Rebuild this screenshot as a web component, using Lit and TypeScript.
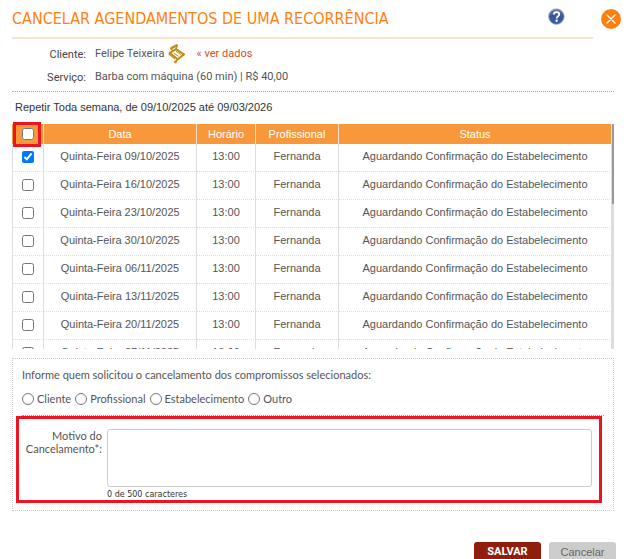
import { LitElement, html, css } from "lit";
import { customElement, state } from "lit/decorators.js";

const DATES = [
  "09/10/2025",
  "16/10/2025",
  "23/10/2025",
  "30/10/2025",
  "06/11/2025",
  "13/11/2025",
  "20/11/2025",
  "27/11/2025",
];

const REQUESTERS = ["Cliente", "Profissional", "Estabelecimento", "Outro"];

@customElement("app-root")
export class AppRoot extends LitElement {
  @state() private selected = new Set<string>([DATES[0]]);
  @state() private reason = "";

  static styles = css`
    :host {
      display: block;
      box-sizing: border-box;
      height: 100vh;
      overflow: hidden;
      background: #fff;
      color: #555;
      font: 11px/14px Roboto, sans-serif;
    }
    * {
      box-sizing: border-box;
    }
    .header {
      display: flex;
      gap: 8px;
      padding: 0 17px 0 12px;
    }
    .heading {
      flex: 1;
      display: flex;
      justify-content: space-between;
      height: 39px;
      padding: 8px 28px 0 0;
      border-bottom: 2px solid #fce2cb;
    }
    h1 {
      margin: 0;
      font-family: "DejaVu Sans Condensed", sans-serif;
      font-size: 16px;
      line-height: 22px;
      font-weight: 400;
      color: #ff7f0e;
      white-space: nowrap;
    }
    .icon-button {
      display: block;
      padding: 0;
      border: 0;
      background: none;
      line-height: 0;
    }
    .help {
      align-self: flex-start;
    }
    .close {
      align-self: flex-start;
      margin-top: 9px;
    }
    .details {
      display: grid;
      grid-template-columns: 74px 1fr;
      column-gap: 9px;
      margin: 0 24px 0 12px;
      padding: 4px 0 2px;
      border-bottom: 1px dotted #aaa;
    }
    .details dt {
      text-align: right;
      line-height: 22px;
      color: #444;
      padding-top: 1px;
    }
    .details dd {
      display: flex;
      align-items: center;
      margin: 0;
      height: 22px;
    }
    .ribbon {
      margin: 0 11px 0 3px;
    }
    a {
      color: #d2501e;
      text-decoration: none;
    }
    .repeat {
      margin: 0;
      padding: 8px 15px 10px;
      color: #333;
    }
    .repeat,
    table {
      font-family: "Liberation Sans", Arial, sans-serif;
      font-size: 11px;
      line-height: 14px;
    }
    .schedule {
      position: relative;
      margin: 0 24px 0 12px;
    }
    .scroller {
      display: flex;
      height: 225px;
      overflow: hidden;
    }
    table {
      flex: 1;
      align-self: flex-start;
      table-layout: fixed;
      border-collapse: separate;
      border-spacing: 0;
      text-align: center;
    }
    th {
      height: 20px;
      padding: 0;
      background: #f8983a;
      border-right: 1px solid #fbe3cc;
      color: #fff;
      font-weight: 400;
    }
    td {
      height: 28px;
      padding: 0 0 3px;
      border-right: 1px solid #ddd;
      border-bottom: 1px dotted #ddd;
    }
    td:first-child {
      padding: 0 0 2px;
      border-left: 1px solid #ddd;
    }
    .c-check { width: 32px; }
    .c-date { width: 153px; }
    .c-time { width: 59px; }
    .c-pro { width: 83px; }
    input[type="checkbox"],
    input[type="radio"] {
      width: 12px;
      height: 12px;
      margin: 0;
    }
    input[type="checkbox"] {
      display: block;
      margin: 0 auto;
    }
    .track {
      width: 2px;
      background: #ddd;
    }
    .thumb {
      height: 80px;
      background: #999;
    }
    .mark {
      position: absolute;
      top: -2px;
      left: 1px;
      width: 28px;
      height: 25px;
      border: 3px solid #ee1320;
      pointer-events: none;
    }
    .panel {
      margin: 9px 24px 0 12px;
      padding: 9px 9px 7px 3px;
      border: 1px dotted #ccc;
      font-family: Lato, sans-serif;
    }
    fieldset {
      margin: 0 0 0 6px;
      padding: 0;
      border: 0;
      border-bottom: 1px dotted #999;
    }
    legend {
      padding: 0;
    }
    .radios {
      display: flex;
      gap: 4px;
      padding: 10px 0 9px;
    }
    .radios label {
      display: flex;
      align-items: center;
      gap: 3px;
    }
    .reason {
      display: grid;
      grid-template-columns: 83px 1fr;
      column-gap: 5px;
      margin-right: 2px;
      padding: 10px 7px 0 0;
      border: 3px solid #ee1320;
    }
    .reason label {
      text-align: right;
      line-height: 13px;
    }
    textarea {
      display: block;
      width: 100%;
      height: 58px;
      margin: 0;
      padding: 4px;
      border: 1px solid #ccc;
      border-radius: 3px;
      resize: none;
      font: inherit;
      color: inherit;
    }
    .count {
      display: block;
      margin-top: 2px;
      font-family: "DejaVu Sans", sans-serif;
      font-size: 8px;
      line-height: 11px;
      color: #333;
    }
    .actions {
      display: flex;
      justify-content: flex-end;
      gap: 8px;
      margin-top: 31px;
      padding-right: 22px;
    }
    .actions button {
      width: 67px;
      height: 20px;
      padding: 0;
      border: 0;
      border-radius: 3px;
      font: 11px/20px "Liberation Sans", Arial, sans-serif;
      background: #cdcdcd;
      color: #666;
    }
    .actions .save {
      background: #8f1f0c;
      color: #fff;
      font-family: Roboto, sans-serif;
      font-weight: 700;
    }
  `;

  private toggle(date: string) {
    const next = new Set(this.selected);
    if (!next.delete(date)) next.add(date);
    this.selected = next;
  }

  private toggleAll(event: Event) {
    const on = (event.target as HTMLInputElement).checked;
    this.selected = new Set(on ? DATES : []);
  }

  render() {
    return html`
      <header class="header">
        <div class="heading">
          <h1>CANCELAR AGENDAMENTOS DE UMA RECORRÊNCIA</h1>
          <button class="icon-button help" aria-label="Ajuda">
            <svg width="18" height="18" viewBox="0 0 18 18">
              <defs>
                <linearGradient id="ball" x1="0" y1="0" x2="0" y2="1">
                  <stop offset="0" stop-color="#6c86b8" />
                  <stop offset="0.45" stop-color="#3a5896" />
                  <stop offset="1" stop-color="#3560a6" />
                </linearGradient>
              </defs>
              <circle cx="9.4" cy="8.6" r="7.8" fill="url(#ball)" stroke="#a9b4c8" stroke-width="0.8" />
              <path d="M6.8 6.6C6.8 4.9 8 4.1 9.5 4.1c1.6 0 2.7.9 2.7 2.3 0 1.9-2.5 2-2.5 4" fill="none" stroke="#fff" stroke-width="1.8" />
              <circle cx="9.6" cy="12.7" r="1.2" fill="#fff" />
            </svg>
          </button>
        </div>
        <button class="icon-button close" aria-label="Fechar">
          <svg width="20" height="20" viewBox="0 0 20 20">
            <circle cx="10" cy="10" r="10" fill="#ff7f0e" />
            <path d="M6 6l8 8M14 6l-8 8" stroke="#fff" stroke-width="1.4" stroke-linecap="round" />
          </svg>
        </button>
      </header>

      <dl class="details">
        <dt>Cliente:</dt>
        <dd>
          Felipe Teixeira
          <svg class="ribbon" width="18" height="20" viewBox="0 0 18 20" fill="none" stroke="#c08d16">
            <path d="M3.2 4.2L8.8 1.4" stroke-width="2.4" stroke-linecap="round" />
            <path d="M3 4.4L4.6 6.6M9 1.8L8 5.2" stroke-width="1.4" />
            <path d="M8 5.2L16 10.4 9.8 15.2 1.6 8.8z" stroke-width="2" stroke-linejoin="round" />
            <path d="M5.6 9l5 3.4M8 7.2l5 3.4" stroke-width="1" />
            <path d="M9.8 15L7.8 17.6" stroke-width="1.8" />
            <path d="M1.6 8.8l-.4 1.6 6 4.4" stroke-width="1.2" />
            <circle cx="7.4" cy="18" r="1.4" fill="#c08d16" stroke="none" />
          </svg>
          <a href="#">« ver dados</a>
        </dd>
        <dt>Serviço:</dt>
        <dd>Barba com máquina (60 min) | R$ 40,00</dd>
      </dl>

      <p class="repeat">Repetir Toda semana, de 09/10/2025 até 09/03/2026</p>

      <section class="schedule">
        <div class="scroller">
          <table>
            <thead>
              <tr>
                <th class="c-check">
                  <input
                    type="checkbox"
                    aria-label="Selecionar todos"
                    .checked=${this.selected.size === DATES.length}
                    @change=${this.toggleAll}
                  />
                </th>
                <th class="c-date">Data</th>
                <th class="c-time">Horário</th>
                <th class="c-pro">Profissional</th>
                <th>Status</th>
              </tr>
            </thead>
            <tbody>
              ${DATES.map(
                (date) => html`
                  <tr>
                    <td>
                      <input
                        type="checkbox"
                        aria-label=${date}
                        .checked=${this.selected.has(date)}
                        @change=${() => this.toggle(date)}
                      />
                    </td>
                    <td>Quinta-Feira ${date}</td>
                    <td>13:00</td>
                    <td>Fernanda</td>
                    <td>Aguardando Confirmação do Estabelecimento</td>
                  </tr>
                `
              )}
            </tbody>
          </table>
          <div class="track"><div class="thumb"></div></div>
        </div>
        <div class="mark"></div>
      </section>

      <section class="panel">
        <fieldset>
          <legend>Informe quem solicitou o cancelamento dos compromissos selecionados:</legend>
          <div class="radios">
            ${REQUESTERS.map(
              (name) => html`<label><input type="radio" name="requester" />${name}</label>`
            )}
          </div>
        </fieldset>
        <div class="reason">
          <label for="reason">Motivo do Cancelamento*:</label>
          <div>
            <textarea
              id="reason"
              maxlength="500"
              .value=${this.reason}
              @input=${(e: Event) => (this.reason = (e.target as HTMLTextAreaElement).value)}
            ></textarea>
            <span class="count">${this.reason.length} de 500 caracteres</span>
          </div>
        </div>
      </section>

      <footer class="actions">
        <button class="save">SALVAR</button>
        <button>Cancelar</button>
      </footer>
    `;
  }
}
